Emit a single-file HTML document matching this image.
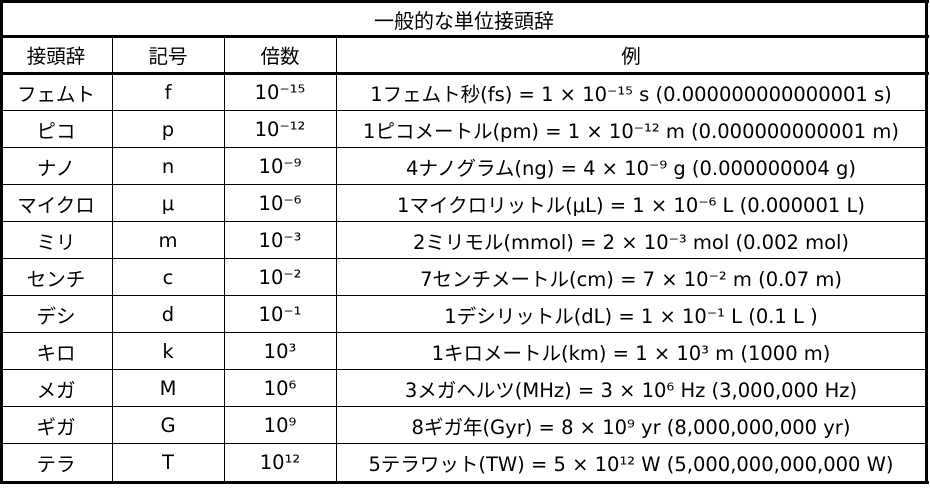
<!DOCTYPE html>
<html><head><meta charset="utf-8"><style>
body{margin:0;background:#fff;width:930px;height:490px;overflow:hidden;font-family:"DejaVu Sans","Noto Sans CJK JP",sans-serif;font-size:19.5px;color:#000}
.l{position:absolute;background:#000}
.c{position:absolute;display:flex;align-items:center;justify-content:center;white-space:nowrap}
</style></head><body>
<div class="l" style="left:0;top:0;width:929px;height:3px"></div>
<div class="l" style="left:0;top:0;width:3px;height:484px"></div>
<div class="l" style="left:925px;top:0;width:3px;height:484px"></div>
<div class="l" style="left:0;top:481px;width:929px;height:3px"></div>
<div class="l" style="left:0;top:35px;width:929px;height:3px"></div>
<div class="l" style="left:0;top:72px;width:929px;height:3px"></div>
<div class="l" style="left:112px;top:37px;width:1px;height:445px"></div>
<div class="l" style="left:224px;top:37px;width:1px;height:445px"></div>
<div class="l" style="left:336px;top:37px;width:1px;height:445px"></div>
<div class="c" style="left:0;top:2px;width:928px;height:34px;font-size:20px">一般的な単位接頭辞</div>
<div id="rows"></div>
<script>
var h=[["接頭辞","記号","倍数","例"]];
var d=[["フェムト","f","10⁻¹⁵","1フェムト秒(fs) = 1 × 10⁻¹⁵ s (0.000000000000001 s)"],
["ピコ","p","10⁻¹²","1ピコメートル(pm) = 1 × 10⁻¹² m (0.000000000001 m)"],
["ナノ","n","10⁻⁹","4ナノグラム(ng) = 4 × 10⁻⁹ g (0.000000004 g)"],
["マイクロ","μ","10⁻⁶","1マイクロリットル(μL) = 1 × 10⁻⁶ L (0.000001 L)"],
["ミリ","m","10⁻³","2ミリモル(mmol) = 2 × 10⁻³ mol (0.002 mol)"],
["センチ","c","10⁻²","7センチメートル(cm) = 7 × 10⁻² m (0.07 m)"],
["デシ","d","10⁻¹","1デシリットル(dL) = 1 × 10⁻¹ L (0.1 L )"],
["キロ","k","10³","1キロメートル(km) = 1 × 10³ m (1000 m)"],
["メガ","M","10⁶","3メガヘルツ(MHz) = 3 × 10⁶ Hz (3,000,000 Hz)"],
["ギガ","G","10⁹","8ギガ年(Gyr) = 8 × 10⁹ yr (8,000,000,000 yr)"],
["テラ","T","10¹²","5テラワット(TW) = 5 × 10¹² W (5,000,000,000,000 W)"]];
var xs=[0,112,224,336,926],s="";
function row(r,top,ht){for(var i=0;i<4;i++)s+='<div class="c" style="left:'+xs[i]+'px;top:'+top+'px;width:'+(xs[i+1]-xs[i])+'px;height:'+ht+'px">'+r[i]+'</div>';}
row(h[0],37,35);
for(var j=0;j<d.length;j++){var t=74+j*37;row(d[j],t,37);if(j>0)s+='<div class="l" style="left:0;top:'+(t-1)+'px;width:928px;height:1px"></div>';}
document.getElementById("rows").innerHTML=s;
</script>
</body></html>
